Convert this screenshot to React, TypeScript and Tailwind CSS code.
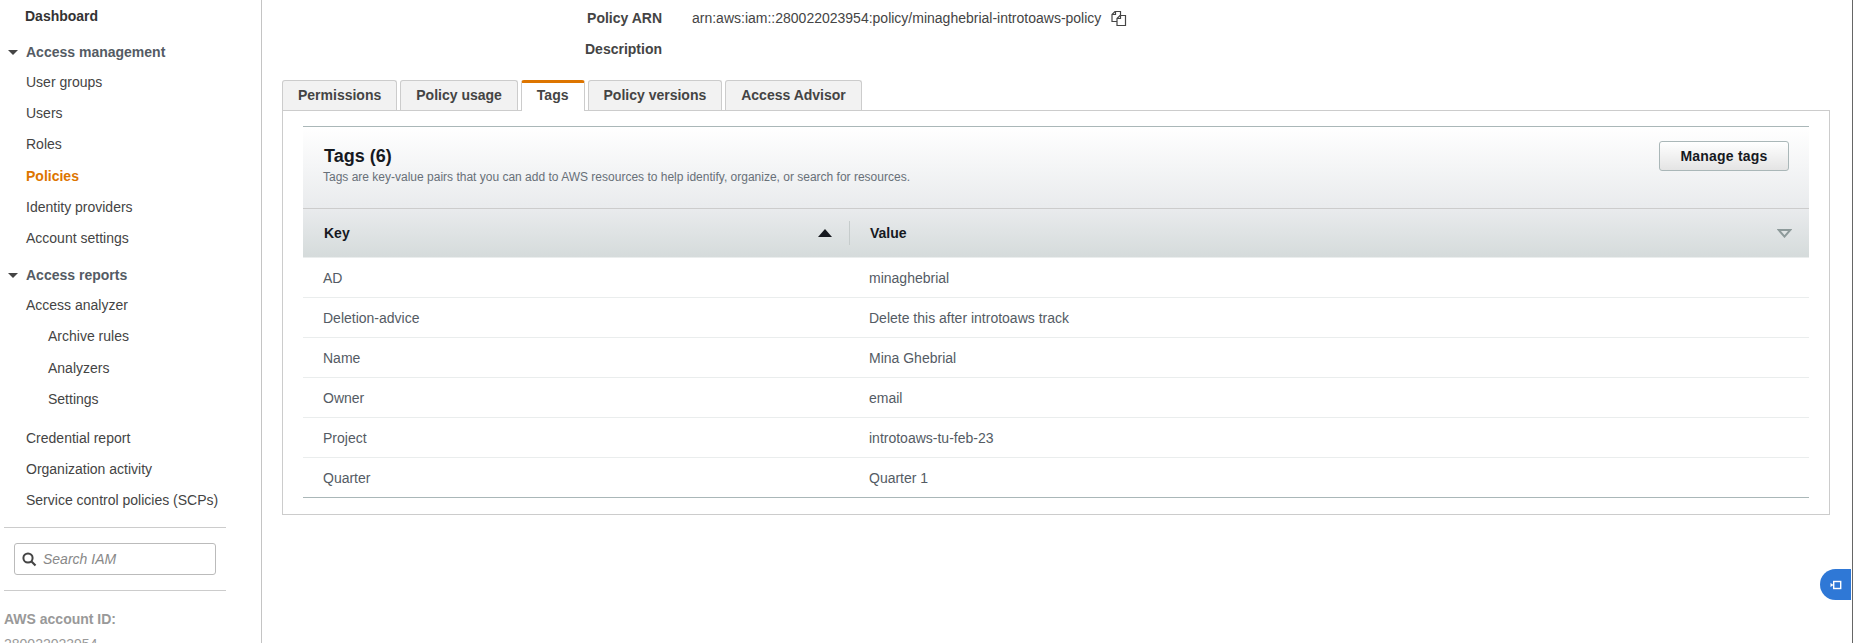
import React from "react";

const navClass = "h-[31px] flex items-center text-[14px] text-[#444]";

const Caret = () => <span className="w-0 h-0 border-x-[5px] border-x-transparent border-t-[5px] border-t-[#444] mr-[8px]" />;

const Sidebar = () => {
  return (
    <aside className="w-[262px] h-[643px] shrink-0 border-r border-[#c4c4c4] overflow-hidden pt-[1px]">
      <div className="h-[30px] pl-[25px] flex items-center text-[14px] font-bold text-[#333]">Dashboard</div>
      <div className="h-[30px] mt-[6px] pl-[8px] flex items-center text-[14px] font-bold text-[#545b64]">
        <Caret />
        <span>Access management</span>
      </div>
      <div className="pl-[26px]">
        <div className={navClass}>User groups</div>
        <div className={navClass}>Users</div>
        <div className={navClass}>Roles</div>
        <div className="h-[31px] mt-[1px] flex items-center text-[14px] font-bold text-[#dd7500]">Policies</div>
        <div className={navClass}>Identity providers</div>
        <div className={navClass}>Account settings</div>
      </div>
      <div className="h-[30px] mt-[6px] pl-[8px] flex items-center text-[14px] font-bold text-[#545b64]">
        <Caret />
        <span>Access reports</span>
      </div>
      <div className="pl-[26px]">
        <div className={navClass}>Access analyzer</div>
        <div className="pl-[22px]">
          <div className={navClass}>Archive rules</div>
          <div className={`${navClass} mt-[1px]`}>Analyzers</div>
          <div className={navClass}>Settings</div>
        </div>
        <div className={`${navClass} mt-[8px]`}>Credential report</div>
        <div className={navClass}>Organization activity</div>
        <div className={navClass}>Service control policies (SCPs)</div>
      </div>
      <div className="ml-[4px] w-[222px] mt-[11px] border-t border-[#ccc] pt-[15px] pb-[15px] pl-[10px]">
        <div className="w-[202px] h-[32px] border border-[#bbb] rounded-[3px] flex items-center pl-[6px]">
          <svg width="16" height="16" viewBox="0 0 16 16" fill="none" className="mr-[6px]">
            <circle cx="7" cy="7" r="4.6" stroke="#444" strokeWidth="2" />
            <path d="M10.5 10.5L14.5 14.5" stroke="#444" strokeWidth="2.2" />
          </svg>
          <span className="text-[14px] italic text-[#888]">Search IAM</span>
        </div>
      </div>
      <div className="ml-[4px] w-[222px] border-t border-[#ccc] pt-[19px] text-[14px] text-[#999]">
        <div className="font-bold leading-[18px]">AWS account ID:</div>
        <div className="mt-[7px] leading-[18px]">280022023954</div>
      </div>
    </aside>
  );
};

const tabs = ["Permissions", "Policy usage", "Tags", "Policy versions", "Access Advisor"];

const rows = [
  ["AD", "minaghebrial"],
  ["Deletion-advice", "Delete this after introtoaws track"],
  ["Name", "Mina Ghebrial"],
  ["Owner", "email"],
  ["Project", "introtoaws-tu-feb-23"],
  ["Quarter", "Quarter 1"],
];

export default function App() {
  return (
    <div className="relative w-[1853px] h-[643px] overflow-hidden bg-white flex border-r border-[#666]" style={{ fontFamily: '"Liberation Sans", Arial, sans-serif' }}>
      <Sidebar />
      <main className="flex-1 pl-[20px] pr-[22px]">
        <div className="flex items-center h-[37px] text-[14px]">
          <div className="w-[380px] text-right font-bold text-[#444]">Policy ARN</div>
          <div className="ml-[30px] text-[#444]">arn:aws:iam::280022023954:policy/minaghebrial-introtoaws-policy</div>
          <svg width="16" height="17" viewBox="0 0 16 17" fill="none" stroke="#444" strokeWidth="1.2" className="ml-[10px]">
            <path d="M6 11.5H1V4.5L4 1.5H9.5V6" />
            <path d="M4.5 1.5V4.5H1" />
            <path d="M6 8.5L9 5.5H14.5V15.5H6z" />
            <path d="M9.5 5.5V8.5H6" />
          </svg>
        </div>
        <div className="flex items-center h-[25px] text-[14px]">
          <div className="w-[380px] text-right font-bold text-[#444]">Description</div>
        </div>
        <div className="flex gap-[3px] h-[30px] mt-[18px] relative z-10">
          {tabs.map((t) =>
            t === "Tags" ? (
              <div key={t} className="h-[31px] px-[15px] pb-[4px] bg-white border-x border-[#ccc] border-t-[3px] border-t-[#dd7500] rounded-t-[3px] text-[14px] font-bold text-[#444] flex items-center">
                {t}
              </div>
            ) : (
              <div key={t} className="px-[15px] bg-[#f2f2f2] border border-b-0 border-[#ccc] rounded-t-[3px] text-[14px] font-bold text-[#444] flex items-center">
                {t}
              </div>
            )
          )}
        </div>
        <div className="border border-[#ccc] h-[405px] px-[20px] pt-[15px]">
          <div className="border-t border-[#aab7b8]">
            <div className="h-[82px] bg-gradient-to-b from-white to-[#e9ebed] flex justify-between pl-[21px] pr-[20px] pt-[14px] border-b border-[#ccc]">
              <div>
                <div className="text-[18px] font-bold text-[#16191f] leading-[22px] mt-[4px]">Tags (6)</div>
                <div className="text-[12px] text-[#687078] leading-[16px] mt-[2px] -ml-px">Tags are key-value pairs that you can add to AWS resources to help identify, organize, or search for resources.</div>
              </div>
              <button className="w-[130px] h-[30px] border border-[#aab7b8] rounded-[3px] bg-gradient-to-b from-white to-[#e4e4e4] text-[14px] font-bold text-[#16191f] tracking-[0.2px]">Manage tags</button>
            </div>
            <div className="h-[49px] bg-gradient-to-b from-[#e9ebed] to-[#d5dbdb] flex items-center text-[14px] font-bold text-[#16191f] border-b border-[#eaeded]">
              <div className="w-[547px] pl-[21px] pr-[17px] flex items-center justify-between h-[24px] border-r border-[#c6cccc]">
                <span>Key</span>
                <span className="w-0 h-0 border-x-[7px] border-x-transparent border-b-[8px] border-b-[#16191f]" />
              </div>
              <div className="flex-1 pl-[20px] pr-[17px] flex items-center justify-between">
                <span>Value</span>
                <svg width="15" height="9" viewBox="0 0 15 9" fill="none">
                  <path d="M1.7 1h11.6L7.5 7.6z" stroke="#8d9a9a" strokeWidth="2" />
                </svg>
              </div>
            </div>
            {rows.map(([k, v], i) => (
              <div key={k} className={`h-[40px] pt-[1px] flex items-center text-[14px] text-[#545b64] border-b ${i === rows.length - 1 ? "border-[#aab7b8]" : "border-[#eaeded]"}`}>
                <div className="w-[546px] pl-[20px]">{k}</div>
                <div className="pl-[20px]">{v}</div>
              </div>
            ))}
          </div>
        </div>
      </main>
      <div className="absolute right-[1px] top-[569px] w-[31px] h-[31px] bg-[#2f78d6] rounded-l-full flex items-center pl-[10px]">
        <svg width="12" height="10" viewBox="0 0 12 10" fill="none">
          <rect x="3.7" y="1.5" width="7" height="7" stroke="white" strokeWidth="1.4" />
          <path d="M0.5 3l3 2-3 2z" fill="white" />
        </svg>
      </div>
    </div>
  );
}
